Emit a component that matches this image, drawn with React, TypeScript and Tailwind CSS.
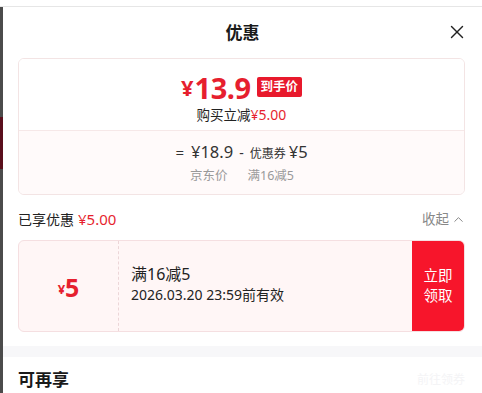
import { X, ChevronUp } from "lucide-react";

const font = { fontFamily: '"Noto Sans", "Noto Sans CJK SC", sans-serif' };

const App = () => {
  return (
    <div className="w-[482px] h-[393px] overflow-hidden bg-white flex flex-col" style={font}>
      <div className="h-[7px] shrink-0 border-b border-[#e6e6e6] bg-white" />
      <div className="flex flex-1 min-h-0">
        {/* page behind the sheet */}
        <div className="w-[3px] shrink-0 flex flex-col bg-[#4a4a4a]">
          <div className="h-[110px] bg-[#4b4b4b]" />
          <div className="h-[52px] bg-[#5a0f1c]" />
          <div className="flex-1 bg-[#4b4b4b]" />
        </div>

        <div className="flex-1 flex flex-col">
          <div className="relative h-[51px] shrink-0 flex items-center justify-center">
            <span className="text-[17px] font-bold text-[#1a1a1a] mt-[1px]">优惠</span>
            <X className="absolute right-[14px] top-[14px] w-[22px] h-[22px] text-[#222]" strokeWidth={1.5} />
          </div>

          <div className="px-[15px] pr-[17px]">
            <div className="rounded-md border border-[#f3e4e4] overflow-hidden">
              <div className="h-[71px] bg-white flex flex-col items-center pt-[14px]">
                <div className="flex items-center h-[28px]">
                  <span className="text-[#e61f2f] font-bold text-[22px] leading-none mr-[1px]">¥</span>
                  <span className="text-[#e61f2f] font-bold text-[29px] leading-none tracking-[-0.5px]">13.9</span>
                  <span className="ml-[6px] bg-[#e8192c] text-white font-bold text-[12.5px] leading-none px-[4px] h-[20px] flex items-center rounded-[2px]">到手价</span>
                </div>
                <div className="mt-[5px] text-[13.5px] leading-[18px] text-[#222]">
                  购买立减<span className="text-[#e61f2f] text-[14px]">¥5.00</span>
                </div>
              </div>
              <div className="h-[64px] border-t border-[#f6e8e8] bg-[#fffafa] flex flex-col items-center pt-[10px]">
                <div className="flex items-baseline text-[#333] leading-[22px]">
                  <span className="text-[15px] mr-[7px]">=</span>
                  <span className="text-[16.5px]">¥18.9</span>
                  <span className="text-[14px] mx-[6px]">-</span>
                  <span className="text-[12px] mr-[3px]">优惠券</span>
                  <span className="text-[16.5px]">¥5</span>
                </div>
                <div className="flex gap-[20px] text-[12.5px] leading-[18px] text-[#999] mt-[2px] ml-[1px]">
                  <span>京东价</span>
                  <span>满16减5</span>
                </div>
              </div>
            </div>

            <div className="h-[45px] flex items-center justify-between pt-[3px]">
              <div className="text-[14px] text-[#222] flex items-center">
                已享优惠<span className="ml-[4px] text-[15px] text-[#e61f2f]">¥5.00</span>
              </div>
              <div className="flex items-center text-[13.5px] text-[#888] -mr-[1px]">
                收起
                <ChevronUp className="w-[15px] h-[15px] ml-[2px]" strokeWidth={1.6} />
              </div>
            </div>

            <div className="h-[92px] rounded-md border border-[#f5dfe1] bg-[#fff6f6] flex overflow-hidden">
              <div className="w-[100px] shrink-0 border-r border-dashed border-[#ecd6d8] flex items-center justify-center pt-[2px]">
                <span className="text-[#e61f2f] font-bold text-[13px] leading-none mt-[4px]">¥</span>
                <span className="text-[#e61f2f] font-bold text-[25px] leading-none">5</span>
              </div>
              <div className="flex-1 flex flex-col justify-center pl-[12px] pb-[4px]">
                <span className="text-[16px] leading-[21px] text-[#222]">满16减5</span>
                <span className="text-[14px] leading-[20px] text-[#222]">2026.03.20 23:59前有效</span>
              </div>
              <div className="w-[52px] shrink-0 bg-[#f7152b] flex flex-col items-center justify-center text-white text-[14.5px] leading-[20px] pb-[2px]">
                <span>立即</span>
                <span>领取</span>
              </div>
            </div>
          </div>

          <div className="h-[11px] mt-[14px] bg-[#f7f7f9] shrink-0" />

          <div className="flex items-center justify-between px-[15px] pr-[17px] h-[50px] pt-[9px]">
            <span className="text-[17px] font-bold text-[#1a1a1a]">可再享</span>
            <span className="text-[12px] text-[#f4f4f6]">前往领券</span>
          </div>
        </div>
      </div>
    </div>
  );
};

export default App;
